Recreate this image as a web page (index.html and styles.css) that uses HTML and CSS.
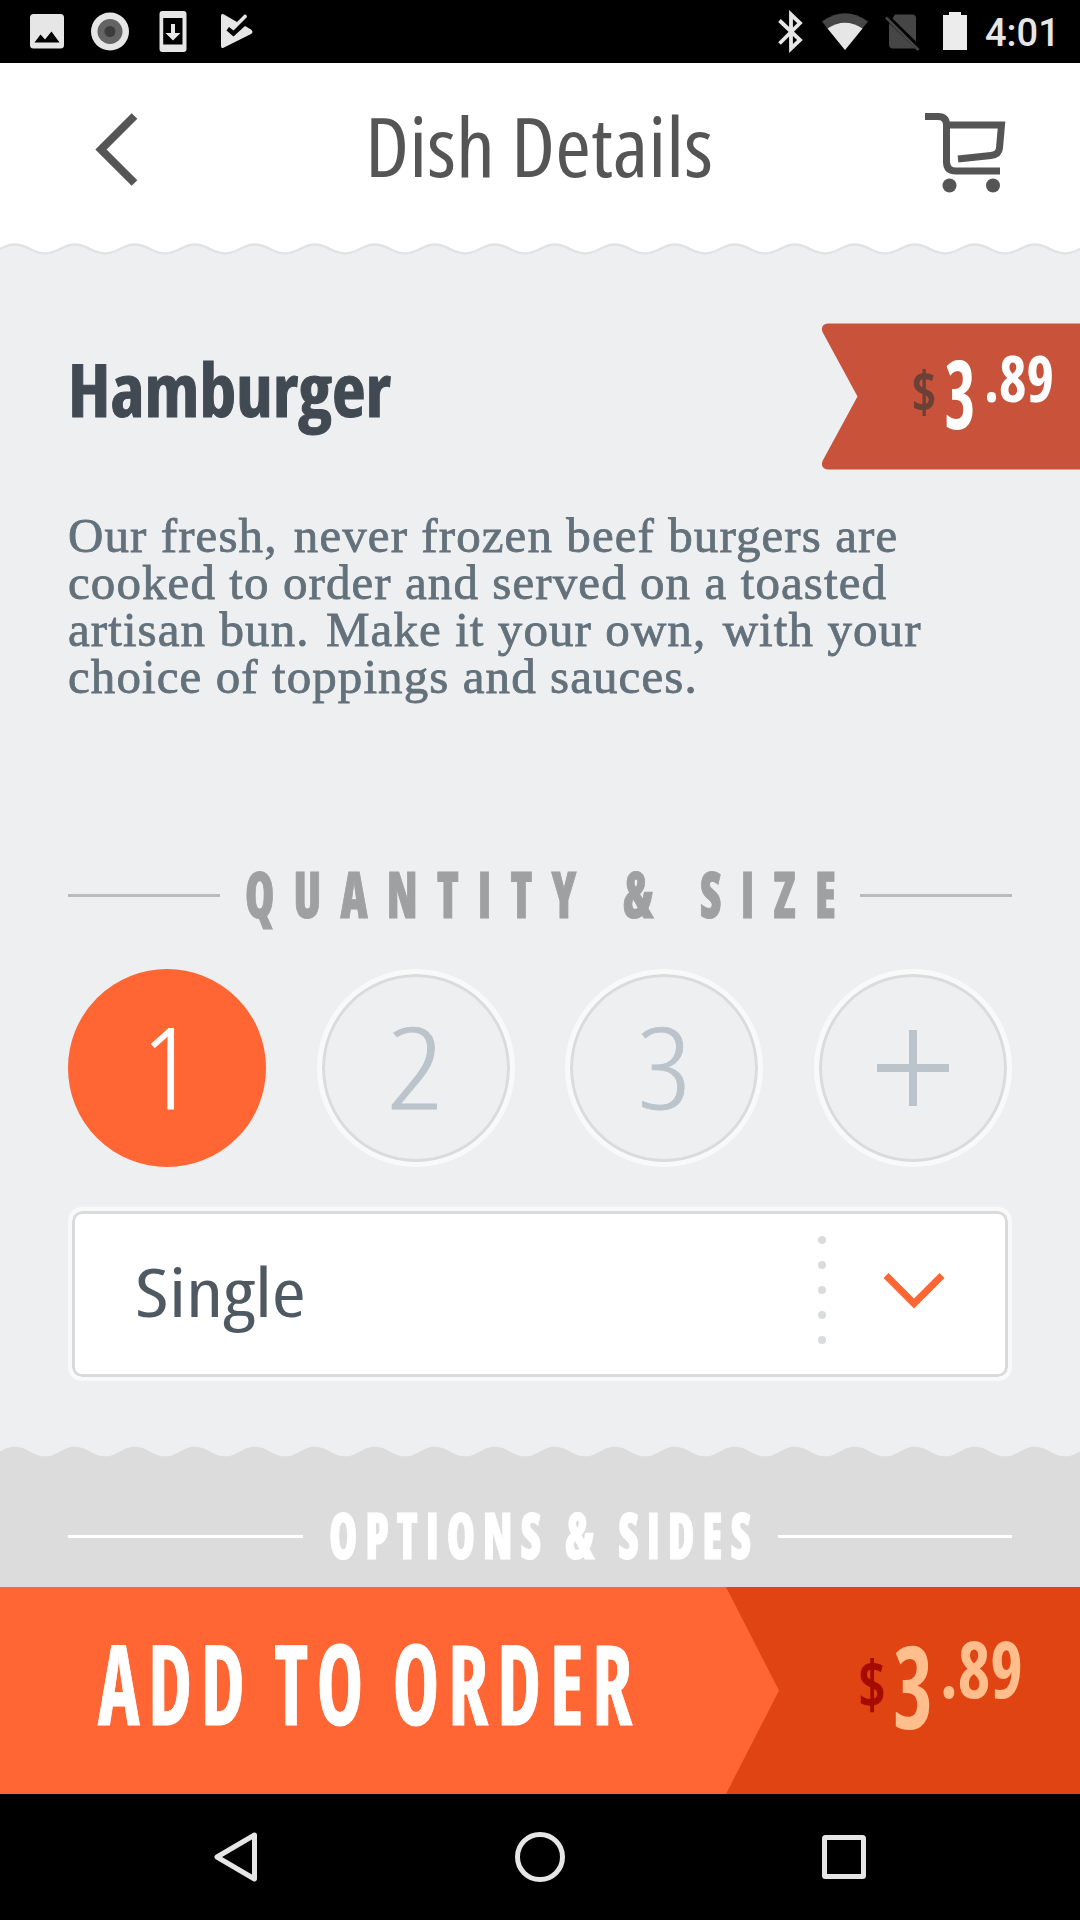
FILE: index.html
```html
<!DOCTYPE html>

<html lang="en">
	<head>
		<meta charset="utf-8" />
		<title>Dish Details</title>
		<link rel="stylesheet" href="styles.css">
	</head>

	<body>
		<div id="statusbar">
			<div class="notifications">
				<svg width="40" height="46" viewBox="0 0 40 46">
					<path fill="#e6e6e6" fill-rule="evenodd" d="M6.500 6H33.500Q37 6 37 9.500V37Q37 40.500 33.500 40.500H6.500Q3 40.500 3 37V9.500Q3 6 6.500 6ZM7.500 34.500H32.500L24.500 23.500L18 31.500L13.500 26.500Z" />
				</svg>
				<svg width="40" height="46" viewBox="0 0 40 46">
					<circle cx="20" cy="23.500" r="19" fill="#e6e6e6" />
					<circle cx="20" cy="23.500" r="12.500" fill="#646464" />
					<circle cx="20" cy="23.500" r="5.500" fill="#3c3c3c" />
				</svg>
				<svg width="40" height="46" viewBox="0 0 40 46">
					<path fill="#e6e6e6" fill-rule="evenodd" d="M9.500 3H30.500Q33.500 3 33.500 6V41Q33.500 44 30.500 44H9.500Q6.500 44 6.500 41V6Q6.500 3 9.500 3ZM10.200 10V36.500H29.500V10Z" />
					<path fill="#e6e6e6" d="M18 16H22V25H27.500L20 32.500L12.500 25H18Z" />
				</svg>
				<svg width="40" height="46" viewBox="0 0 40 46">
					<path fill="#e6e6e6" d="M5 8Q5 5 8 6.500L21 14L28.500 6.500Q31 6 31 9L17.500 22.500L13 19L10.500 22.500L17.500 28.500L29 18L35 21.500Q38 24 35 26L8 39.500Q5 41 5 38Z" />
				</svg>
			</div>
			<div class="system">
				<svg width="46" height="46" viewBox="0 0 46 46">
					<path fill="none" stroke="#e6e6e6" stroke-width="3.800" d="M12.500 12.500L33 32L24 40.500V6.500L33 15L12.500 35.500" />
				</svg>
				<svg width="46" height="46" viewBox="0 0 46 46">
					<path fill="#464646" d="M0 13.500Q23 -3 46 13.500L23 42Z" />
					<path fill="#e6e6e6" d="M5.500 20.500Q23 9 40.500 20.500L23 42Z" />
				</svg>
				<svg width="46" height="46" viewBox="0 0 46 46">
					<path fill="#464646" d="M18 6.500H35Q39 6.500 39 10V33.500L15.500 10.500ZM12 15L38.500 40.500H16Q12 40.500 12 36.500Z" />
					<path stroke="#464646" stroke-width="2.500" d="M9 9.500L41.500 42" />
				</svg>
				<svg width="46" height="46" viewBox="0 0 46 46">
					<path fill="#ececec" d="M17 4H29V7H35V42H11V7H17Z" />
				</svg>
				<span class="time">4:01</span>
			</div>
		</div>

		<header>
			<svg class="back" width="46" height="76" viewBox="0 0 46 76">
				<path d="M40.500 4L7 37.500L40.500 71" />
			</svg>
			<svg class="title" width="352" height="80" viewBox="0 0 352 80">
				<text x="0" y="67" textLength="348" lengthAdjust="spacingAndGlyphs">Dish Details</text>
			</svg>
			<svg class="cart" width="82" height="82" viewBox="0 0 82 82">
				<path d="M0 5.500H13Q21.500 5.500 21.500 14V51Q21.500 60 31 60H75" />
				<path d="M21.500 14H76.500L74.500 37Q74 43.500 66 44.500L33 48" />
				<circle cx="24.500" cy="74.500" r="7" />
				<circle cx="68" cy="74.500" r="7" />
			</svg>
		</header>
		<svg class="wave" width="1080" height="20">
			<defs>
				<pattern id="wave-white" width="60" height="20" patternUnits="userSpaceOnUse">
					<path fill="#ffffff" d="M-15 0V13.500C-2 13.500 2 4.500 15 4.500S32 13.500 45 13.500S62 4.500 75 4.500V0Z" />
					<path fill="none" stroke="#e1e2e3" stroke-width="2.400" d="M-15 13.500C-2 13.500 2 4.500 15 4.500S32 13.500 45 13.500S62 4.500 75 4.500" />
				</pattern>
			</defs>
			<rect width="1080" height="20" fill="url(#wave-white)" />
		</svg>

		<section class="dish">
			<div class="dish-head">
				<svg class="name" width="330" height="90" viewBox="0 0 330 90">
					<text x="0" y="64" textLength="323" lengthAdjust="spacingAndGlyphs">Hamburger</text>
				</svg>
				<svg class="ribbon" width="259" height="147" viewBox="0 0 259 147">
					<path fill="#c9523b" d="M259 0.500H7Q-1 1.500 1.500 9L36.500 73.500L1.500 138Q-1 145.500 7 146.500H259Z" />
					<text class="dollar" x="90.500" y="90" font-size="57" textLength="25" lengthAdjust="spacingAndGlyphs">$</text>
					<text x="123.500" y="106" font-size="94" textLength="31" lengthAdjust="spacingAndGlyphs">3</text>
					<text x="163" y="79" font-size="64" textLength="70" lengthAdjust="spacingAndGlyphs">.89</text>
				</svg>
			</div>

			<p class="description">
				<span class="line">Our fresh<span class="stop">,</span> never frozen beef burgers are</span>
				<span class="line">cooked to order and served on a toasted</span>
				<span class="line">artisan bun<span class="stop">.</span> Make it your own<span class="stop">,</span> with your</span>
				<span class="line">choice of toppings and sauces.</span>
			</p>

			<div class="divider">
				<svg width="640" height="58" viewBox="0 0 640 58">
					<text x="25" y="51" textLength="610" letter-spacing="26" lengthAdjust="spacingAndGlyphs">QUANTITY &amp; SIZE</text>
				</svg>
			</div>

			<div class="quantity">
				<div class="circle selected">
					<svg width="60" height="110" viewBox="0 0 60 110"><text x="6" y="95.500" textLength="48" lengthAdjust="spacingAndGlyphs">1</text></svg>
				</div>
				<div class="circle">
					<svg width="60" height="110" viewBox="0 0 60 110"><text x="1" y="95.500" textLength="56" lengthAdjust="spacingAndGlyphs">2</text></svg>
				</div>
				<div class="circle">
					<svg width="60" height="110" viewBox="0 0 60 110"><text x="3.500" y="95.500" textLength="53" lengthAdjust="spacingAndGlyphs">3</text></svg>
				</div>
				<div class="circle">
					<svg width="72" height="76" viewBox="0 0 72 76"><path stroke="#bbc3cb" stroke-width="8" d="M0 38H72M36 0V76" /></svg>
				</div>
			</div>

			<div class="select">
				<svg class="value" width="180" height="90" viewBox="0 0 180 90">
					<text x="-2" y="68" textLength="171" lengthAdjust="spacingAndGlyphs">Single</text>
				</svg>
				<div class="dots"><i></i><i></i><i></i><i></i><i></i></div>
				<svg class="arrow" width="62" height="38" viewBox="0 0 62 38">
					<path d="M3 3.500L31 31.500L59 3.500" />
				</svg>
			</div>
		</section>

		<svg class="wave" width="1080" height="20">
			<defs>
				<pattern id="wave-grey" width="60" height="20" patternUnits="userSpaceOnUse">
					<path fill="#dcdcdc" d="M-15 20V14.300C-2 14.300 2 4.700 15 4.700S32 14.300 45 14.300S62 4.700 75 4.700V20Z" />
				</pattern>
			</defs>
			<rect width="1080" height="20" fill="url(#wave-grey)" />
		</svg>
		<section class="options">
			<div class="divider light">
				<svg width="475" height="58" viewBox="0 0 475 58">
					<text x="26" y="51" textLength="430" letter-spacing="11" lengthAdjust="spacingAndGlyphs">OPTIONS &amp; SIDES</text>
				</svg>
			</div>
		</section>

		<div id="order">
			<svg class="label" width="779" height="207" viewBox="0 0 779 207">
				<path fill="#ff6633" d="M0 0H726L779 103.500L726 207H0Z" />
				<text x="98" y="138" textLength="543" letter-spacing="12" word-spacing="-3" lengthAdjust="spacingAndGlyphs">ADD TO ORDER</text>
			</svg>
			<svg class="total" width="301" height="207" viewBox="0 0 301 207">
				<text class="dollar" x="79" y="121" font-size="66" textLength="28" lengthAdjust="spacingAndGlyphs">$</text>
				<text x="114" y="142" font-size="114" textLength="40" lengthAdjust="spacingAndGlyphs">3</text>
				<text x="161" y="111" font-size="79" textLength="83" lengthAdjust="spacingAndGlyphs">.89</text>
			</svg>
		</div>

		<nav>
			<svg width="56" height="56" viewBox="0 0 56 56">
				<path d="M46.500 6L9 28L46.500 50Z" />
			</svg>
			<svg width="56" height="56" viewBox="0 0 56 56">
				<circle cx="28" cy="28" r="22.500" />
			</svg>
			<svg width="56" height="56" viewBox="0 0 56 56">
				<rect x="8.500" y="8.500" width="39" height="39" rx="1" />
			</svg>
		</nav>
	</body>

</html>
```

FILE: styles.css
```css
body{
	margin: 0;
	width: 1080px;
	height: 1920px;
	overflow: hidden;
	background-color: #eeeff1;
	font-family: "Open Sans", "Noto Sans", sans-serif;
}

svg{
	display: block;
	flex: none;
	overflow: visible;
}

text{
	font-stretch: 75%;
}

#statusbar{
	display: flex;
	justify-content: space-between;
	height: 55px;
	padding: 8px 28px 0px 27px;
	background-color: #000000;
}

.notifications{
	display: flex;
	gap: 23px;
}

.system{
	display: flex;
	gap: 9px;
}

.time{
	font-family: Roboto, sans-serif;
	font-size: 38px;
	font-weight: 500;
	line-height: 50px;
	color: #e6e6e6;
	width: 67px;
	margin-left: -2px;
}

header{
	display: flex;
	justify-content: space-between;
	height: 127px;
	padding: 50px 73px 0px 94px;
	background-color: #ffffff;
}

.back path, .cart path{
	fill: none;
	stroke: #555555;
	stroke-width: 8;
}

.back{
	margin-top: -1px;
}

.cart path{
	stroke-width: 7;
}

.cart{
	margin-top: -2px;
}

.cart circle{
	fill: #555555;
}

.title{
	margin-left: 130px;
	margin-right: 114px;
	margin-top: -3px;
}

.title text{
	font-size: 82px;
	fill: #555555;
}

.wave{
	height: 20px;
}

.dish{
	height: 1119px;
	padding: 63px 68px 0px 68px;
}

.dish-head{
	display: flex;
	justify-content: space-between;
	height: 147px;
	margin-right: -68px;
}

.name{
	margin-top: 30px;
}

.name text{
	font-size: 73px;
	font-weight: 700;
	fill: #414a52;
	stroke: #414a52;
	stroke-width: 1;
}

.ribbon text, .total text{
	font-weight: 700;
	fill: #ffffff;
}

.ribbon .dollar{
	fill: #6b4037;
}

.description{
	margin: 42px 0px 167px 0px;
	font-family: "Liberation Serif", serif;
	font-size: 49px;
	line-height: 47px;
	letter-spacing: 1.08px;
	color: #63717b;
	-webkit-text-stroke: 0.8px #63717b;
}

.line{
	display: block;
	white-space: nowrap;
}

/* a little more air after commas and full stops */
.stop{
	margin-right: 3px;
}

.divider{
	display: flex;
	align-items: center;
	height: 58px;
}

.divider:before, .divider:after{
	content: "";
	flex: 1;
	height: 3px;
	margin-bottom: 1px;
	background-color: #b9bbbd;
}

.divider text{
	font-size: 64px;
	font-weight: 800;
	fill: #9fa0a1;
	stroke: #9fa0a1;
	stroke-width: 1;
}

.light:before, .light:after{
	background-color: #ffffff;
}

.light text{
	fill: #ffffff;
	stroke: #ffffff;
}

.quantity{
	display: flex;
	justify-content: space-between;
	margin-top: 44px;
}

.circle{
	display: flex;
	align-items: center;
	justify-content: center;
	box-sizing: border-box;
	width: 198px;
	height: 198px;
	border: 5px solid #f9f9f9;
	border-radius: 50%;
	box-shadow: inset 0px 0px 0px 3px #d9dbdc;
}

.circle text{
	font-size: 113px;
	font-weight: 300;
	fill: #bbc3cb;
	stroke: #bbc3cb;
	stroke-width: 0.8;
}

.selected{
	border-color: #ff6633;
	background-color: #ff6633;
	box-shadow: none;
}

.selected text{
	fill: #ffffff;
	stroke: #ffffff;
}

.select{
	display: flex;
	align-items: center;
	box-sizing: border-box;
	height: 174px;
	margin-top: 40px;
	padding-left: 65px;
	border: 4px solid #f9f9f9;
	border-radius: 14px;
	background-color: #ffffff;
	box-shadow: inset 0px 0px 0px 3px #d9dadb;
}

.value text{
	font-size: 68px;
	fill: #4f5961;
}

.dots{
	display: flex;
	flex-direction: column;
	gap: 17px;
	margin-left: 501px;
	margin-top: -8px;
}

.dots i{
	width: 8px;
	height: 8px;
	border-radius: 50%;
	background-color: #dadbdc;
}

.arrow{
	margin-left: 57px;
	margin-top: -7px;
}

.arrow path{
	fill: none;
	stroke: #ff6633;
	stroke-width: 7;
}

.options{
	height: 79px;
	padding: 46px 68px 0px 68px;
	background-color: #dcdcdc;
}

#order{
	display: flex;
	height: 207px;
	background-color: #df4412;
}

.label text{
	font-size: 111px;
	font-weight: 700;
	fill: #ffffff;
	stroke: #ffffff;
	stroke-width: 1;
}

.total text{
	fill: #ffbe8b;
}

.total .dollar{
	fill: #a50b00;
}

nav{
	display: flex;
	justify-content: space-between;
	align-items: center;
	height: 126px;
	padding: 0px 208px;
	background-color: #000000;
}

nav svg{
	fill: none;
	stroke: #e6e6e6;
	stroke-width: 5;
	stroke-linejoin: round;
}
```
